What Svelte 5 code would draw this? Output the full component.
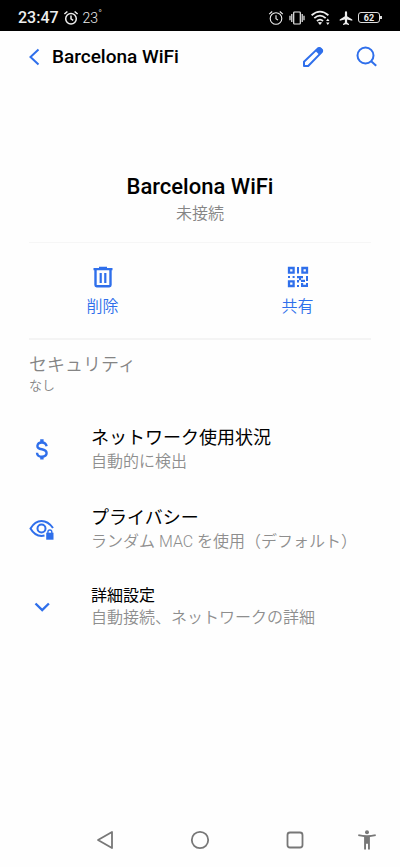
<script>
  const rows = [
    { icon: "dollar", title: "ネットワーク使用状況", text: "自動的に検出" },
    {
      icon: "eye",
      title: "プライバシー",
      text: "ランダム MAC を使用（デフォルト）",
    },
    {
      icon: "down",
      title: "詳細設定",
      text: "自動接続、ネットワークの詳細",
      small: true,
    },
  ];
</script>

<svelte:head>
  <title>Barcelona WiFi</title>
</svelte:head>

<div class="screen">
  <div class="status">
    <span class="clock">23:47</span>
    <svg width="16" height="16" viewBox="0 0 16 16" stroke-width="1.5">
      <circle cx="8" cy="8.7" r="5.3" />
      <path d="M8 5.5v3.4l2.2 1.5M1.4 4 4.4 1.5M14.6 4l-3-2.5" />
    </svg>
    <span class="temp">23<sup>°</sup></span>
    <span class="spacer"></span>
    <svg width="16" height="16" viewBox="0 0 16 16" stroke-width="1.1">
      <circle cx="8" cy="8.5" r="5.8" />
      <path d="M8 5.3v3.4l2 1.4M1.2 4.2 4.2 1.5M14.8 4.2l-3-2.7" />
    </svg>
    <svg
      class="vibrate"
      width="16"
      height="16"
      viewBox="0 0 16 16"
      stroke-width="1.2"
    >
      <rect x="4.7" y="2" width="6.6" height="12" rx="0.8" />
      <path d="M2.8 4v8M13.2 4v8M1 5.8v4.4M15 5.8v4.4" />
    </svg>
    <svg
      class="wifi"
      width="20"
      height="16"
      viewBox="0 0 20 16"
      stroke-width="1.8"
    >
      <path d="M.6 5.2Q9-2 17.400 5.200M3.300 8.200Q9 3 14.700 8.200M6 11Q9 8.200 12 11" />
      <path class="solid" d="M6.900 12.600Q9 11.200 11.100 12.600L9 15Z" />
      <path
        class="solid"
        d="M16.800 8.600l1.700 2.500h-3.400zM16.800 15l1.700-2.500h-3.400z"
      />
    </svg>
    <svg class="plane" width="14" height="16" viewBox="0 0 14 16">
      <path
        class="solid"
        d="M7 1.2c.8 0 1.1.7 1.1 1.6v3.5l5.2 3.1v1.4L8.100 9.400v3.200l1.900 1.300v1L7 14.200l-3 .7v-1l1.900-1.300V9.400L.7 10.800V9.400l5.200-3.100V2.800c0-.9.3-1.600 1.100-1.600Z"
      />
    </svg>
    <span class="battery">62</span>
  </div>

  <header class="bar">
    <button class="back" aria-label="戻る">
      <svg width="12" height="18" viewBox="0 0 12 18" stroke-width="2">
        <path d="M10.500 1.500 2.500 9l8 7.500" />
      </svg>
    </button>
    <h1>Barcelona WiFi</h1>
    <button aria-label="編集">
      <svg width="24" height="24" viewBox="0 0 24 24" stroke-width="2">
        <path
          d="M3 21v-4.300L16.700 3.600q1.500-1.300 2.900 0l.9.900q1.300 1.400 0 2.900L7.200 21Z"
          stroke-linejoin="round"
        />
        <path
          class="solid"
          d="m14 5.500 3-2.800q1.600-1 3 .2l1.200 1.200q1.200 1.400.2 3l-2.900 2.900Z"
        />
      </svg>
    </button>
    <button aria-label="検索">
      <svg width="24" height="24" viewBox="0 0 24 24" stroke-width="2">
        <circle cx="10.500" cy="10.500" r="8" />
        <path d="m16.200 16.200 5 4.600" />
      </svg>
    </button>
  </header>

  <main>
    <section class="network">
      <h2>Barcelona WiFi</h2>
      <p>未接続</p>
    </section>

    <div class="actions">
      <button>
        <svg width="24" height="24" viewBox="0 0 24 24">
          <path
            d="M4.500 5v15q0 1.200 1.200 1.200h12.600q1.200 0 1.200-1.200V5"
            stroke-width="2.400"
          />
          <path d="M2.500 4.200h19M8 2.800h8" stroke-width="2.200" />
          <path d="M9.700 8v10M14.300 8v10" stroke-width="2.200" />
        </svg>
        削除
      </button>
      <button>
        <svg width="24" height="24" viewBox="0 0 24 24">
          <path
            d="M3 3h4.600v4.600H3ZM16.400 3H21v4.600h-4.600ZM3 16.400h4.600V21H3Z"
            stroke-width="2.300"
          />
          <path
            class="solid"
            d="M11 2h2v6.600h-2zM2 11h2v2H2zM6.600 11h2v2h-2zM11 11h6v2.300h-2v2h-2v-2h-2zM20 11h2v5h-2zM15 14.700h4V17h-4zM11 15h2v2.500h-2zM11 20h2v2h-2zM15 18h2.200v1.800H20V18h2v4h-7z"
          />
        </svg>
        共有
      </button>
    </div>

    <section class="security">
      <h3>セキュリティ</h3>
      <p>なし</p>
    </section>

    <div class="list">
      {#each rows as row}
        <button class="row">
          <span class="icon">
            {#if row.icon === "dollar"}
              <svg width="26" height="26" viewBox="0 0 26 26">
                <path
                  d="M17.600 9.200q-.7-3.700-4.700-3.700T8.400 8.900q0 2.600 4.500 3.400t4.700 3.800q0 3.600-4.700 3.600T8 15.700"
                  stroke-width="2.400"
                />
                <path d="M12.900 2.300v3.500M12.900 19.200v3.300" stroke-width="3.400" />
              </svg>
            {:else if row.icon === "eye"}
              <svg width="26" height="26" viewBox="0 0 26 26">
                <path
                  d="M15.500 18.600Q6.500 20.400 1.500 11.500 6 4 12.500 4t11.500 7"
                  stroke-width="2"
                />
                <circle cx="12.500" cy="11.500" r="4" stroke-width="2" />
                <path class="solid" d="M17.200 15.700h7.300v7h-7.300z" />
                <path
                  d="M18.900 16.500v-1.600q0-1.900 1.950-1.900t1.950 1.900v1.600"
                  stroke-width="1.400"
                />
              </svg>
            {:else}
              <svg width="26" height="26" viewBox="0 0 26 26">
                <path d="m6.500 8.500 6.700 6.500 6.700-6.500" stroke-width="2.400" />
              </svg>
            {/if}
          </span>
          <span class="label">
            <span class="title" class:small={row.small}>{row.title}</span>
            <span class="text">{row.text}</span>
          </span>
        </button>
      {/each}
    </div>
  </main>

  <nav>
    <button aria-label="前の画面">
      <svg width="22" height="22" viewBox="0 0 22 22" stroke-width="1.8">
        <path d="M18 3v16L4 11Z" stroke-linejoin="round" />
      </svg>
    </button>
    <button aria-label="ホーム">
      <svg width="22" height="22" viewBox="0 0 22 22" stroke-width="1.8">
        <circle cx="11" cy="11" r="8.2" />
      </svg>
    </button>
    <button aria-label="アプリ履歴">
      <svg width="22" height="22" viewBox="0 0 22 22" stroke-width="1.8">
        <rect x="3.500" y="3.500" width="15" height="15" rx="2.500" />
      </svg>
    </button>
    <button class="access" aria-label="ユーザー補助">
      <svg width="22" height="22" viewBox="0 0 22 22">
        <circle class="solid" cx="11" cy="3.300" r="2" />
        <path
          class="solid"
          d="M2.500 5.300q8.500 2 17 0l.4 1.700q-3 .7-6 1v12.500H12v-5.800h-2v5.800H8.100V8q-3-.3-6-1Z"
        />
      </svg>
    </button>
  </nav>
</div>

<style>
  :global(body) {
    margin: 0;
    background: #fefefe;
  }
  .screen {
    display: flex;
    flex-direction: column;
    min-height: 100vh;
    color: #000;
    font-family: Roboto, "Noto Sans CJK JP", sans-serif;
  }
  h1,
  h2,
  h3,
  p {
    margin: 0;
  }
  button {
    padding: 0;
    border: 0;
    background: none;
    color: #2f6feb;
    font: inherit;
    cursor: pointer;
  }
  svg {
    display: block;
    flex: none;
    fill: none;
    stroke: currentColor;
  }
  .solid {
    fill: currentColor;
    stroke: none;
  }

  .status {
    display: flex;
    align-items: center;
    box-sizing: border-box;
    height: 31px;
    padding: 4px 17px 0 18px;
    background: #000;
    color: #eee;
  }
  .clock {
    margin-right: 4px;
    font-size: 16px;
    font-weight: 500;
  }
  .temp {
    margin-left: 4px;
    font-size: 14px;
    font-weight: 300;
    line-height: 16px;
  }
  .temp sup {
    font-size: 10px;
    line-height: 1px;
  }
  .spacer {
    flex: 1;
  }
  .vibrate {
    margin: 0 6px 0 5px;
  }
  .plane {
    margin: 0 5px 0 8px;
  }
  .battery {
    position: relative;
    box-sizing: border-box;
    width: 22px;
    height: 11px;
    margin-right: 3px;
    border: 1px solid #ddd;
    border-radius: 3px;
    font-size: 9px;
    font-weight: 700;
    line-height: 10px;
    text-align: center;
  }
  .battery::after {
    content: "";
    position: absolute;
    top: 3px;
    right: -3px;
    width: 2px;
    height: 3px;
    background: #ddd;
  }

  .bar {
    display: flex;
    align-items: center;
    gap: 30px;
    height: 51px;
    padding: 0 21px 0 28px;
  }
  .back {
    margin-right: -18px;
  }
  h1 {
    flex: 1;
    font-size: 19px;
    font-weight: 500;
  }

  main {
    flex: 1;
  }
  .network {
    margin: 0 29px;
    padding: 90px 0 16px;
    border-bottom: 1px solid #f6f6f6;
    text-align: center;
  }
  h2 {
    font-size: 22px;
    font-weight: 500;
    line-height: 30px;
  }
  .network p {
    color: #858585;
    font-size: 16px;
    font-weight: 350;
    line-height: 24px;
  }
  .actions {
    display: grid;
    grid-template-columns: 1fr 1fr;
    padding: 22px 5px 19px;
  }
  .actions button {
    display: flex;
    flex-direction: column;
    align-items: center;
    gap: 6px;
    font-size: 16px;
    font-weight: 350;
    line-height: 24px;
  }
  .security {
    margin: 0 29px;
    padding-top: 13px;
    border-top: 2px solid #f4f4f4;
    color: #858585;
    font-weight: 350;
  }
  h3 {
    font-size: 18px;
    font-weight: 350;
    line-height: 24px;
  }
  .security p {
    font-size: 13px;
    line-height: 18px;
  }

  .list {
    padding-top: 31px;
  }
  .row {
    display: flex;
    align-items: center;
    gap: 36px;
    width: 100%;
    margin-bottom: 33px;
    padding: 0 29px;
    text-align: left;
  }
  .label {
    display: flex;
    flex-direction: column;
    line-height: 24px;
  }
  .title {
    color: #000;
    font-size: 18px;
  }
  .title.small {
    font-size: 16px;
    line-height: 20px;
  }
  .text {
    color: #8e8e8e;
    font-size: 16px;
    font-weight: 350;
    line-height: 23px;
  }

  nav {
    display: flex;
    justify-content: flex-end;
    gap: 73px;
    padding: 0 22px 16px;
  }
  nav button {
    color: #777;
  }
  .access {
    margin-left: -23px;
  }
</style>
